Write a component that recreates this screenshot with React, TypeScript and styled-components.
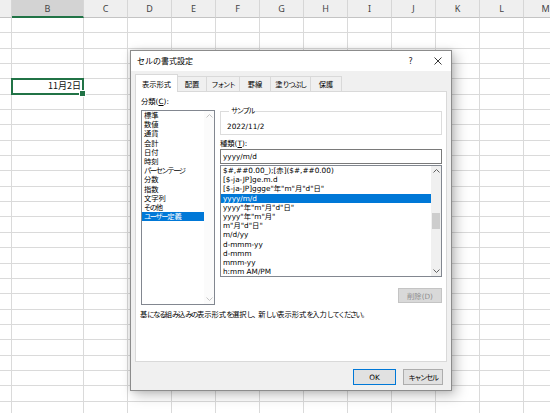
import React from "react";
import styled, { createGlobalStyle } from "styled-components";

const GlobalStyle = createGlobalStyle`
  html, body { margin: 0; padding: 0; background: #fff; overflow: hidden; }
  body { font-family: "Noto Sans CJK JP", "Noto Sans", sans-serif; }
  * { box-sizing: border-box; }
`;

const COL_TEMPLATE = "12px 72px repeat(11, 44px)";
const LETTERS = ["", "B", "C", "D", "E", "F", "G", "H", "I", "J", "K", "L", "M"];
const ROW_COUNT = 26;
const ACTIVE_ROW = 4;

const Sheet = styled.div`
  position: relative;
  width: 550px;
  height: 413px;
  overflow: hidden;
  background: #fff;
`;

const HeaderRow = styled.div`
  display: grid;
  grid-template-columns: ${COL_TEMPLATE};
  height: 18px;
`;

const HeaderCell = styled.div<{ $selected?: boolean }>`
  display: flex;
  align-items: center;
  justify-content: center;
  background: ${(p) => (p.$selected ? "#d3d3d3" : "#efefef")};
  border-right: 1px solid #d6d6d6;
  border-bottom: ${(p) => (p.$selected ? "2px solid #217346" : "1px solid #c4c4c4")};
  color: #444;
  font-family: "Noto Sans", "DejaVu Sans", sans-serif;
  font-size: 9px;
`;

const GridRow = styled.div`
  display: grid;
  grid-template-columns: ${COL_TEMPLATE};
  height: 15.35px;
`;

const Cell = styled.div<{ $active?: boolean }>`
  position: relative;
  border-right: 1px solid #dadada;
  border-bottom: 1px solid #dadada;
  font-size: 9px;
  line-height: 14px;
  text-align: right;
  padding-right: 2px;
  color: #111;
  ${(p) =>
    p.$active
      ? `
    &::after {
      content: "";
      position: absolute;
      top: -1px; left: -1px; right: -1px; bottom: -1px;
      border: 2px solid #217346;
    }
    &::before {
      content: "";
      position: absolute;
      right: -3px; bottom: -3px;
      width: 5px; height: 5px;
      background: #217346;
      border: 1px solid #fff;
      z-index: 2;
    }
  `
      : ""}
`;

const Dialog = styled.div`
  position: absolute;
  left: 130px;
  top: 50px;
  width: 322px;
  height: 341px;
  border: 1px solid #8c8c8c;
  background: #f0f0f0;
  box-shadow: 4px 4px 12px rgba(0, 0, 0, 0.25), 0 0 5px rgba(0, 0, 0, 0.12);
  display: flex;
  flex-direction: column;
  font-family: "DejaVu Sans", "Noto Sans CJK JP", sans-serif;
  font-size: 7.3px;
  color: #000;
`;

const KanaRun = styled.span`
  letter-spacing: -0.2em;
`;

const KANA = /([\u3040-\u30ff\u3001\u3002]+)/;

const Jp = ({ text }: { text: string }) => (
  <>
    {text.split(KANA).map((part, i) =>
      i % 2 === 1 ? <KanaRun key={i}>{part}</KanaRun> : part
    )}
  </>
);

const TitleBar = styled.div`
  height: 20px;
  background: #fff;
  display: flex;
  align-items: center;
  padding-left: 6px;
`;

const TitleText = styled.div`
  flex: 1;
  font-family: "Noto Sans CJK JP", sans-serif;
  font-size: 8px;
  line-height: 10px;
`;

const TitleButton = styled.div`
  width: 27px;
  height: 20px;
  display: flex;
  align-items: center;
  justify-content: center;
  font-size: 8px;
  color: #222;
`;

const Body = styled.div`
  flex: 1;
  display: flex;
  flex-direction: column;
  padding: 3px 4px 0 4px;
`;

const TabStrip = styled.div`
  display: flex;
  align-items: flex-end;
  height: 17px;
  position: relative;
  z-index: 1;
`;

const Tab = styled.div<{ $w: number; $active?: boolean }>`
  width: ${(p) => p.$w}px;
  height: ${(p) => (p.$active ? 18 : 15)}px;
  margin-bottom: ${(p) => (p.$active ? -1 : 0)}px;
  margin-left: -1px;
  &:first-child { margin-left: 0; }
  border: 1px solid #d9d9d9;
  border-bottom: none;
  background: ${(p) => (p.$active ? "#fff" : "#f0f0f0")};
  display: flex;
  align-items: center;
  justify-content: center;
  white-space: nowrap;
`;

const Panel = styled.div`
  height: 271px;
  border: 1px solid #d9d9d9;
  background: #fff;
  padding: 5px 4px 0 5px;
  display: flex;
  flex-direction: column;
`;

const Columns = styled.div`
  display: grid;
  grid-template-columns: 74px 222px;
  column-gap: 5px;
  align-items: start;
`;

const Column = styled.div<{ $top?: number }>`
  display: flex;
  flex-direction: column;
  padding-top: ${(p) => p.$top ?? 0}px;
`;

const Label = styled.div<{ $mt?: number }>`
  line-height: 10px;
  height: 10px;
  margin-top: ${(p) => p.$mt ?? 0}px;
  white-space: nowrap;
`;

const U = styled.span`
  text-decoration: underline;
`;

const ListBox = styled.div<{ $h: number; $mt: number }>`
  height: ${(p) => p.$h}px;
  margin-top: ${(p) => p.$mt}px;
  border: 1px solid #828790;
  display: flex;
  background: #fff;
`;

const Items = styled.div`
  flex: 1;
  overflow: hidden;
`;

const Item = styled.div<{ $selected?: boolean }>`
  height: 9.2px;
  line-height: 9.2px;
  padding-left: 2px;
  white-space: nowrap;
  background: ${(p) => (p.$selected ? "#0078d7" : "transparent")};
  color: ${(p) => (p.$selected ? "#fff" : "#000")};
`;

const ScrollBar = styled.div<{ $disabled?: boolean }>`
  width: 10px;
  background: ${(p) => (p.$disabled ? "#fbfbfb" : "#f0f0f0")};
  display: flex;
  flex-direction: column;
`;

const ScrollArrow = styled.div<{ $disabled?: boolean }>`
  height: 10px;
  display: flex;
  align-items: center;
  justify-content: center;
  color: ${(p) => (p.$disabled ? "#c4c4c4" : "#606060")};
`;

const Track = styled.div`
  flex: 1;
`;

const Thumb = styled.div<{ $offset: number; $h: number }>`
  margin: ${(p) => p.$offset}px 0 0 1px;
  width: 8px;
  height: ${(p) => p.$h}px;
  background: #cdcdcd;
`;

const Fieldset = styled.fieldset`
  margin: 0;
  min-width: 0;
  padding: 6px 6px 2px 6px;
  border: 1px solid #dcdcdc;
`;

const Legend = styled.legend`
  padding: 0 2px;
  margin-left: 2px;
  line-height: 10px;
  font-size: 7.3px;
`;

const Value = styled.div`
  line-height: 10px;
`;

const TextBox = styled.div`
  height: 15px;
  border: 1px solid #7a7a7a;
  padding-left: 2px;
  line-height: 13px;
  background: #fff;
`;

const SmallButton = styled.div`
  align-self: flex-end;
  margin-top: 11px;
  width: 44px;
  height: 15px;
  background: #d9d9d9;
  border: 1px solid #c4c4c4;
  color: #8e8e8e;
  display: flex;
  align-items: center;
  justify-content: center;
`;

const Description = styled.div`
  margin-top: 5px;
  margin-left: -1px;
  line-height: 10px;
  white-space: nowrap;
`;

const ButtonRow = styled.div`
  display: flex;
  justify-content: flex-end;
  gap: 7px;
  margin-top: 7px;
  padding-right: 4px;
`;

const DialogButton = styled.div<{ $w: number; $primary?: boolean }>`
  width: ${(p) => p.$w}px;
  height: 16px;
  background: #e1e1e1;
  border: 1px solid ${(p) => (p.$primary ? "#0078d7" : "#adadad")};
  display: flex;
  align-items: center;
  justify-content: center;
`;

const Chevron = ({ down }: { down?: boolean }) => (
  <svg width="7" height="4" viewBox="0 0 7 4">
    <polyline
      points={down ? "0.5,0.5 3.5,3.5 6.5,0.5" : "0.5,3.5 3.5,0.5 6.5,3.5"}
      fill="none"
      stroke="currentColor"
      strokeWidth="1"
    />
  </svg>
);

const CloseIcon = () => (
  <svg width="8" height="8" viewBox="0 0 8 8">
    <path d="M0.5 0.5 L7.5 7.5 M7.5 0.5 L0.5 7.5" stroke="#222" strokeWidth="0.9" fill="none" />
  </svg>
);

const TABS: { label: string; w: number }[] = [
  { label: "表示形式", w: 43 },
  { label: "配置", w: 30 },
  { label: "フォント", w: 34 },
  { label: "罫線", w: 32 },
  { label: "塗りつぶし", w: 41 },
  { label: "保護", w: 32 },
];

const CATEGORIES = [
  "標準",
  "数値",
  "通貨",
  "会計",
  "日付",
  "時刻",
  "パーセンテージ",
  "分数",
  "指数",
  "文字列",
  "その他",
  "ユーザー定義",
];

const FORMATS = [
  "$#,##0.00_);[赤]($#,##0.00)",
  "[$-ja-JP]ge.m.d",
  '[$-ja-JP]ggge"年"m"月"d"日"',
  "yyyy/m/d",
  'yyyy"年"m"月"d"日"',
  'yyyy"年"m"月"',
  'm"月"d"日"',
  "m/d/yy",
  "d-mmm-yy",
  "d-mmm",
  "mmm-yy",
  "h:mm AM/PM",
];

export default function App() {
  return (
    <>
      <GlobalStyle />
      <Sheet>
        <HeaderRow>
          {LETTERS.map((l, i) => (
            <HeaderCell key={i} $selected={l === "B"}>
              {l}
            </HeaderCell>
          ))}
        </HeaderRow>
        {Array.from({ length: ROW_COUNT }).map((_, r) => (
          <GridRow key={r}>
            {LETTERS.map((l, c) => (
              <Cell key={c} $active={r === ACTIVE_ROW && l === "B"}>
                {r === ACTIVE_ROW && l === "B" ? "11月2日" : null}
              </Cell>
            ))}
          </GridRow>
        ))}

        <Dialog>
          <TitleBar>
            <TitleText>セルの書式設定</TitleText>
            <TitleButton>?</TitleButton>
            <TitleButton>
              <CloseIcon />
            </TitleButton>
          </TitleBar>
          <Body>
            <TabStrip>
              {TABS.map((t, i) => (
                <Tab key={t.label} $w={t.w} $active={i === 0}>
                  <Jp text={t.label} />
                </Tab>
              ))}
            </TabStrip>
            <Panel>
              <Columns>
                <Column>
                  <Label>
                    分類(<U>C</U>):
                  </Label>
                  <ListBox $h={195} $mt={3}>
                    <Items>
                      {CATEGORIES.map((c, i) => (
                        <Item key={c} $selected={i === CATEGORIES.length - 1}>
                          <Jp text={c} />
                        </Item>
                      ))}
                    </Items>
                    <ScrollBar $disabled>
                      <ScrollArrow $disabled>
                        <Chevron />
                      </ScrollArrow>
                      <Track />
                      <ScrollArrow $disabled>
                        <Chevron down />
                      </ScrollArrow>
                    </ScrollBar>
                  </ListBox>
                </Column>
                <Column $top={9}>
                  <Fieldset>
                    <Legend>
                      <Jp text="サンプル" />
                    </Legend>
                    <Value>2022/11/2</Value>
                  </Fieldset>
                  <Label $mt={4}>
                    種類(<U>T</U>):
                  </Label>
                  <TextBox>yyyy/m/d</TextBox>
                  <ListBox $h={112} $mt={1}>
                    <Items>
                      {FORMATS.map((f, i) => (
                        <Item key={f} $selected={i === 3}>
                          {f}
                        </Item>
                      ))}
                    </Items>
                    <ScrollBar>
                      <ScrollArrow>
                        <Chevron />
                      </ScrollArrow>
                      <Track>
                        <Thumb $offset={37} $h={16} />
                      </Track>
                      <ScrollArrow>
                        <Chevron down />
                      </ScrollArrow>
                    </ScrollBar>
                  </ListBox>
                  <SmallButton>削除(D)</SmallButton>
                </Column>
              </Columns>
              <Description>
                <Jp text="基になる組み込みの表示形式を選択し、新しい表示形式を入力してください。" />
              </Description>
            </Panel>
            <ButtonRow>
              <DialogButton $w={43} $primary>
                OK
              </DialogButton>
              <DialogButton $w={40}>
                <Jp text="キャンセル" />
              </DialogButton>
            </ButtonRow>
          </Body>
        </Dialog>
      </Sheet>
    </>
  );
}
